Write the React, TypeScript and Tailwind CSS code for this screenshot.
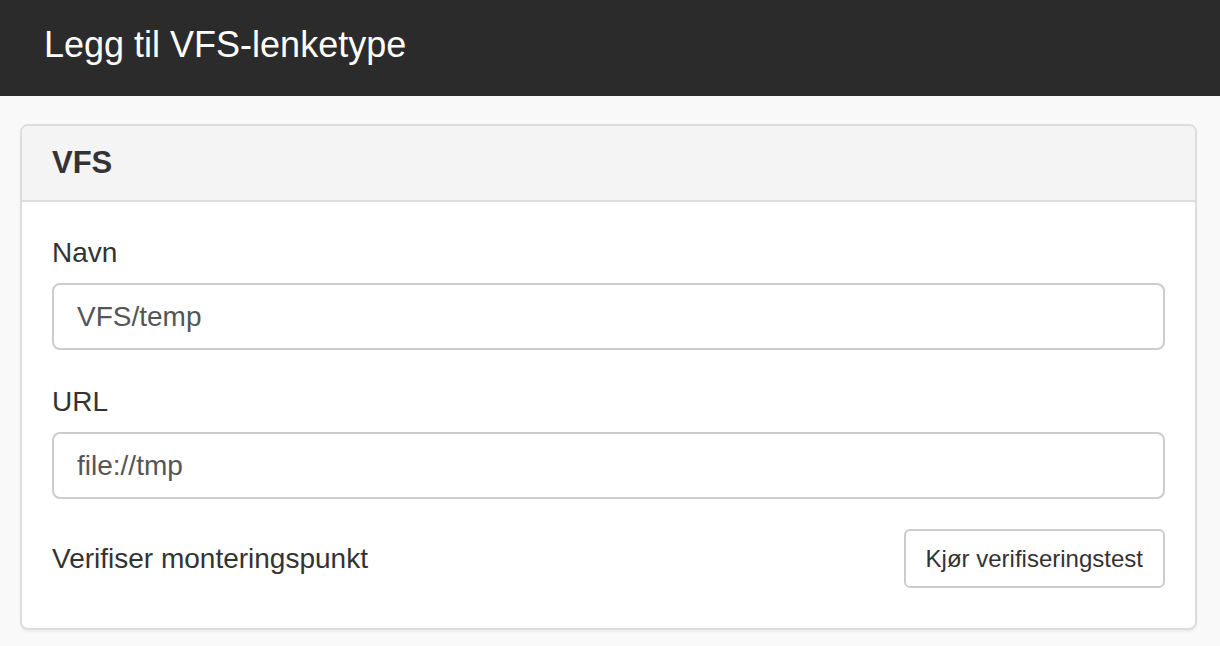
export default function App() {
  return (
    <div className="min-h-[646px] w-full bg-[#f9f9f9] font-['Liberation_Sans',Arial,sans-serif] text-[#333]">
      <header className="h-[96px] bg-[#2b2b2b] px-[44px] pt-[25px]">
        <h1 className="text-[36px] leading-[40px] text-white">Legg til VFS-lenketype</h1>
      </header>
      <main className="ml-[20px] mr-[23px] pt-[28px]">
        <section className="rounded-[8px] border-2 border-[#dddddd] bg-white shadow-[0_2px_2px_rgba(0,0,0,0.05)]">
          <div className="flex h-[76px] items-center rounded-t-[6px] border-b-2 border-[#dddddd] bg-[#f4f4f4] px-[30px]">
            <h2 className="text-[31px] font-bold leading-[34px] text-[#333]">VFS</h2>
          </div>
          <div className="px-[30px] pt-[31px] pb-[40px]">
            <div className="mb-[32px]">
              <label className="mb-[10px] block text-[28px] leading-[40px]">Navn</label>
              <div className="flex h-[67px] items-center rounded-[8px] border-2 border-[#cccccc] bg-white pl-[23px] text-[28px] text-[#555]">
                VFS/temp
              </div>
            </div>
            <div className="mb-[30px]">
              <label className="mb-[10px] block text-[28px] leading-[40px]">URL</label>
              <div className="flex h-[67px] items-center rounded-[8px] border-2 border-[#cccccc] bg-white pl-[23px] text-[28px] text-[#555]">
                file://tmp
              </div>
            </div>
            <div className="flex items-center justify-between">
              <span className="text-[28px] leading-[40px]">Verifiser monteringspunkt</span>
              <button className="h-[59px] rounded-[6px] border-2 border-[#cccccc] bg-white px-[20px] text-[24px] text-[#333]">
                Kjør verifiseringstest
              </button>
            </div>
          </div>
        </section>
      </main>
    </div>
  );
}
